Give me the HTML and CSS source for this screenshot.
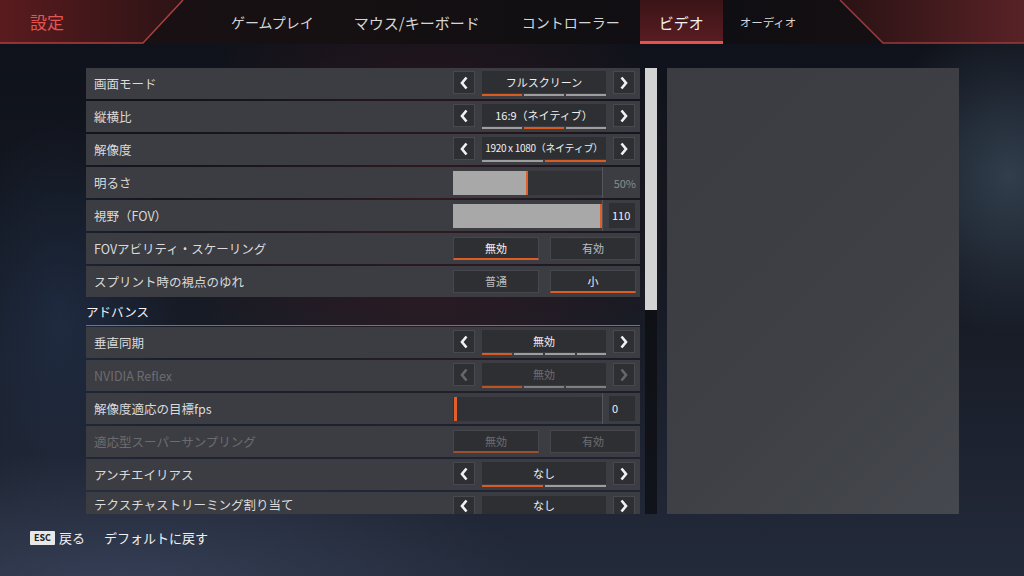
FILE: index.html
```html
<!DOCTYPE html>
<html lang="ja">
<head>
  <meta charset="UTF-8" />
  <title>設定 - ビデオ</title>
  <link rel="stylesheet" href="styles.css">
</head>
<body>
  <header class="topbar">
    <svg class="topbar-deco" width="1024" height="44" viewBox="0 0 1024 44">
      <defs>
        <linearGradient id="gl" x1="0" x2="1" y1="0" y2="0">
          <stop offset="0" stop-color="#5a1b1e"/>
          <stop offset="1" stop-color="#2c1315"/>
        </linearGradient>
        <linearGradient id="gr" x1="0" x2="1" y1="0" y2="0">
          <stop offset="0" stop-color="#2a1214"/>
          <stop offset="1" stop-color="#582226"/>
        </linearGradient>
      </defs>
      <polygon points="0,0 183,0 143,43 0,43" fill="url(#gl)"/>
      <polyline points="0,43 143,43 183,0" fill="none" stroke="#a8413f" stroke-width="1.5"/>
      <polygon points="840,0 1024,0 1024,43 883,43" fill="url(#gr)"/>
      <polyline points="840,0 883,43 1024,43" fill="none" stroke="#9a3b3b" stroke-width="1.5"/>
    </svg>
    <div class="brand">設定</div>
    <nav class="tabs">
      <a href="#" class="tab">ゲームプレイ</a>
      <a href="#" class="tab tab-wide">マウス/キーボード</a>
      <a href="#" class="tab">コントローラー</a>
      <a href="#" class="tab active">ビデオ</a>
      <a href="#" class="tab tab-small">オーディオ</a>
    </nav>
  </header>

  <main class="content">
    <section class="settings">
      <div class="row">
        <span class="label">画面モード</span>
        <div class="stepper">
          <span class="arrow"><svg width="8" height="14" viewBox="0 0 8 14"><path d="M6.5 1.5 L2 7 L6.5 12.5"/></svg></span>
          <div class="value">
            <div class="value-box">フルスクリーン</div>
            <div class="segs"><i class="on"></i><i></i><i></i></div>
          </div>
          <span class="arrow"><svg width="8" height="14" viewBox="0 0 8 14"><path d="M1.5 1.5 L6 7 L1.5 12.5"/></svg></span>
        </div>
      </div>

      <div class="row">
        <span class="label">縦横比</span>
        <div class="stepper">
          <span class="arrow"><svg width="8" height="14" viewBox="0 0 8 14"><path d="M6.5 1.5 L2 7 L6.5 12.5"/></svg></span>
          <div class="value">
            <div class="value-box">16:9（ネイティブ）</div>
            <div class="segs"><i></i><i class="on"></i><i></i></div>
          </div>
          <span class="arrow"><svg width="8" height="14" viewBox="0 0 8 14"><path d="M1.5 1.5 L6 7 L1.5 12.5"/></svg></span>
        </div>
      </div>

      <div class="row">
        <span class="label">解像度</span>
        <div class="stepper">
          <span class="arrow"><svg width="8" height="14" viewBox="0 0 8 14"><path d="M6.5 1.5 L2 7 L6.5 12.5"/></svg></span>
          <div class="value">
            <div class="value-box tight">1920 x 1080（ネイティブ）</div>
            <div class="segs"><i></i><i class="on"></i></div>
          </div>
          <span class="arrow"><svg width="8" height="14" viewBox="0 0 8 14"><path d="M1.5 1.5 L6 7 L1.5 12.5"/></svg></span>
        </div>
      </div>

      <div class="row">
        <span class="label">明るさ</span>
        <div class="slider">
          <div class="track-wrap"><div class="track"><div class="fill" style="width: 50%"></div></div></div>
          <div class="slider-val">50%</div>
        </div>
      </div>

      <div class="row">
        <span class="label">視野（FOV）</span>
        <div class="slider">
          <div class="track-wrap"><div class="track"><div class="fill" style="width: 100%"></div></div></div>
          <div class="val-box">110</div>
        </div>
      </div>

      <div class="row">
        <span class="label">FOVアビリティ・スケーリング</span>
        <div class="toggle">
          <span class="opt selected">無効</span>
          <span class="opt">有効</span>
        </div>
      </div>

      <div class="row">
        <span class="label">スプリント時の視点のゆれ</span>
        <div class="toggle">
          <span class="opt">普通</span>
          <span class="opt selected">小</span>
        </div>
      </div>

      <div class="section-title">アドバンス</div>

      <div class="row">
        <span class="label">垂直同期</span>
        <div class="stepper">
          <span class="arrow"><svg width="8" height="14" viewBox="0 0 8 14"><path d="M6.5 1.5 L2 7 L6.5 12.5"/></svg></span>
          <div class="value">
            <div class="value-box">無効</div>
            <div class="segs"><i class="on"></i><i></i><i></i><i></i></div>
          </div>
          <span class="arrow"><svg width="8" height="14" viewBox="0 0 8 14"><path d="M1.5 1.5 L6 7 L1.5 12.5"/></svg></span>
        </div>
      </div>

      <div class="row disabled">
        <span class="label">NVIDIA Reflex</span>
        <div class="stepper">
          <span class="arrow"><svg width="8" height="14" viewBox="0 0 8 14"><path d="M6.5 1.5 L2 7 L6.5 12.5"/></svg></span>
          <div class="value">
            <div class="value-box">無効</div>
            <div class="segs"><i class="on"></i><i></i><i></i></div>
          </div>
          <span class="arrow"><svg width="8" height="14" viewBox="0 0 8 14"><path d="M1.5 1.5 L6 7 L1.5 12.5"/></svg></span>
        </div>
      </div>

      <div class="row">
        <span class="label">解像度適応の目標fps</span>
        <div class="slider">
          <div class="track-wrap"><div class="track dark"><div class="fill" style="width: 0%"></div></div></div>
          <div class="val-box">0</div>
        </div>
      </div>

      <div class="row disabled">
        <span class="label">適応型スーパーサンプリング</span>
        <div class="toggle">
          <span class="opt selected">無効</span>
          <span class="opt">有効</span>
        </div>
      </div>

      <div class="row">
        <span class="label">アンチエイリアス</span>
        <div class="stepper">
          <span class="arrow"><svg width="8" height="14" viewBox="0 0 8 14"><path d="M6.5 1.5 L2 7 L6.5 12.5"/></svg></span>
          <div class="value">
            <div class="value-box">なし</div>
            <div class="segs"><i class="on"></i><i></i></div>
          </div>
          <span class="arrow"><svg width="8" height="14" viewBox="0 0 8 14"><path d="M1.5 1.5 L6 7 L1.5 12.5"/></svg></span>
        </div>
      </div>

      <div class="row row-last">
        <span class="label">テクスチャストリーミング割り当て</span>
        <div class="stepper">
          <span class="arrow"><svg width="8" height="14" viewBox="0 0 8 14"><path d="M6.5 1.5 L2 7 L6.5 12.5"/></svg></span>
          <div class="value">
            <div class="value-box">なし</div>
          </div>
          <span class="arrow"><svg width="8" height="14" viewBox="0 0 8 14"><path d="M1.5 1.5 L6 7 L1.5 12.5"/></svg></span>
        </div>
      </div>
    </section>

    <div class="scrollbar"><div class="thumb"></div></div>

    <aside class="preview"></aside>
  </main>

  <footer class="footer">
    <span class="key">ESC</span>
    <span class="hint">戻る</span>
    <span class="hint reset">デフォルトに戻す</span>
  </footer>
</body>
</html>
```

FILE: styles.css
```css
body {
  margin: 0;
  width: 1024px;
  height: 576px;
  overflow: hidden;
  font-family: "Noto Sans CJK JP", "Noto Sans", sans-serif;
  color: #dcdcdc;
  background:
    radial-gradient(ellipse 140px 160px at 1010px 175px, rgba(75, 95, 115, 0.55), transparent),
    radial-gradient(ellipse 420px 140px at 120px 590px, rgba(62, 72, 98, 0.7), transparent),
    radial-gradient(ellipse 120px 200px at 60px 320px, rgba(40, 60, 95, 0.45), transparent),
    radial-gradient(ellipse 260px 260px at 430px 200px, rgba(80, 28, 32, 0.5), transparent),
    linear-gradient(180deg, #0e1119 0%, #141821 45%, #232a3a 100%);
}
a {
  text-decoration: none;
  color: inherit;
}

/* header */
.topbar {
  position: relative;
  height: 44px;
  display: flex;
  align-items: stretch;
  background: linear-gradient(90deg, #1c1012 0%, #141012 40%, #0f0e12 70%, #1a1012 100%);
}
.topbar-deco {
  position: absolute;
  top: 0;
  left: 0;
}
.brand {
  position: relative;
  width: 181px;
  padding-left: 30px;
  line-height: 44px;
  font-size: 17px;
  color: #e25656;
}
.tabs {
  position: relative;
  display: flex;
}
.tab {
  display: flex;
  align-items: center;
  padding: 0 20px;
  font-size: 14px;
  color: #d6d6d6;
}
.tab-wide {
  font-size: 15px;
  padding-right: 22px;
}
.tab.active {
  padding: 0 19px;
  font-size: 15px;
  color: #f2f2f2;
  background: linear-gradient(180deg, #3a1417 0%, #5a1d22 100%);
  box-shadow: inset 0 -3px 0 #e4514f;
}
.tab-small {
  font-size: 11.5px;
  padding-left: 17px;
}

/* main area */
.content {
  display: flex;
  padding: 24px 0 0 86px;
  height: 446px;
}
.settings {
  width: 554px;
  height: 446px;
  overflow: hidden;
}
.row {
  display: flex;
  align-items: center;
  justify-content: space-between;
  height: 31px;
  margin-bottom: 2px;
  padding: 0 4px 0 8px;
  background: #3c3d42;
}
.label {
  font-size: 12.5px;
  color: #dadada;
}
.section-title {
  height: 26px;
  line-height: 26px;
  font-size: 12.5px;
  color: #f4f4f4;
  border-bottom: 1px solid #74757a;
  margin-bottom: 1px;
}

/* stepper */
.stepper {
  display: flex;
  align-items: flex-start;
  gap: 7px;
  width: 183px;
}
.arrow {
  display: flex;
  align-items: center;
  justify-content: center;
  width: 20px;
  height: 21px;
  background: #2e2f33;
  border: 1px solid #48494e;
}
.arrow path {
  fill: none;
  stroke: #f2f2f2;
  stroke-width: 2.6;
}
.value {
  width: 124px;
}
.value-box {
  height: 22px;
  line-height: 22px;
  text-align: center;
  font-size: 11px;
  color: #f0f0f0;
  background: #2e2f33;
}
.value-box.tight {
  font-size: 10px;
  letter-spacing: -0.3px;
}
.segs {
  display: flex;
  gap: 2px;
  margin-top: 1px;
}
.segs i {
  flex: 1;
  height: 2px;
  background: #9e9e9e;
}
.segs i.on {
  background: #d95b22;
}

/* slider */
.slider {
  display: flex;
  align-items: center;
  width: 183px;
  height: 31px;
}
.track-wrap {
  display: flex;
  align-items: center;
  width: 149px;
  height: 31px;
  border-right: 1px solid #55565b;
}
.track {
  width: 149px;
  height: 24px;
  background: #313236;
}
.track.dark {
  background: #2f3136;
}
.fill {
  box-sizing: border-box;
  height: 24px;
  min-width: 3px;
  background: #a8a8a8;
  border-right: 2px solid #e0602a;
}
.track.dark .fill {
  border-right-width: 3px;
  margin-left: 1px;
}
.slider-val {
  flex: 1;
  text-align: right;
  font-size: 11px;
  color: #8c8c8c;
}
.val-box {
  width: 23px;
  height: 25px;
  line-height: 25px;
  margin-left: 6px;
  padding-left: 3px;
  font-size: 11px;
  color: #f0f0f0;
  background: #2e2f33;
}

/* toggle */
.toggle {
  display: flex;
  gap: 11px;
  width: 183px;
}
.opt {
  box-sizing: border-box;
  flex: 1;
  height: 23px;
  line-height: 21px;
  text-align: center;
  font-size: 11px;
  color: #bdbdbd;
  background: #2e2f33;
  border: 1px solid #46474c;
}
.opt.selected {
  color: #f4f4f4;
  border-bottom: 2px solid #df5d24;
}

/* disabled rows */
.row.disabled .label {
  color: #6b6c71;
}
.row.disabled .arrow path {
  stroke: #66676c;
}
.row.disabled .value-box,
.row.disabled .opt {
  color: #6c6d72;
}
.row.disabled .segs i {
  background: #7f8084;
}
.row.disabled .segs i.on {
  background: #c0521f;
}
.row.disabled .opt.selected {
  border-bottom-color: #9a5031;
}

/* last row is cut by the list edge, keep its texts inside */
.row-last {
  align-items: flex-start;
  height: 22px;
  padding-top: 0;
  margin-bottom: 0;
}
.row-last .label {
  line-height: 16px;
  margin-top: 5px;
}
.row-last .stepper {
  margin-top: 4px;
}
.row-last .arrow,
.row-last .value-box {
  height: 18px;
  line-height: 18px;
}

/* scrollbar + preview */
.scrollbar {
  width: 12px;
  height: 446px;
  margin-left: 5px;
  background: rgba(12, 13, 18, 0.75);
}
.thumb {
  height: 242px;
  background: #d3d3d3;
}
.preview {
  width: 292px;
  height: 446px;
  margin-left: 10px;
  background: linear-gradient(135deg, #3b3c41 0%, #3e4045 60%, #45484e 100%);
}

/* footer */
.footer {
  display: flex;
  align-items: center;
  padding: 14px 0 0 30px;
  font-size: 13px;
  color: #f0f0f0;
}
.key {
  width: 25px;
  height: 14px;
  line-height: 14px;
  text-align: center;
  font-size: 9px;
  font-weight: bold;
  color: #222;
  background: #e8e8e8;
  border-radius: 1px;
}
.hint {
  margin-left: 4px;
}
.hint.reset {
  margin-left: 19px;
}
```
